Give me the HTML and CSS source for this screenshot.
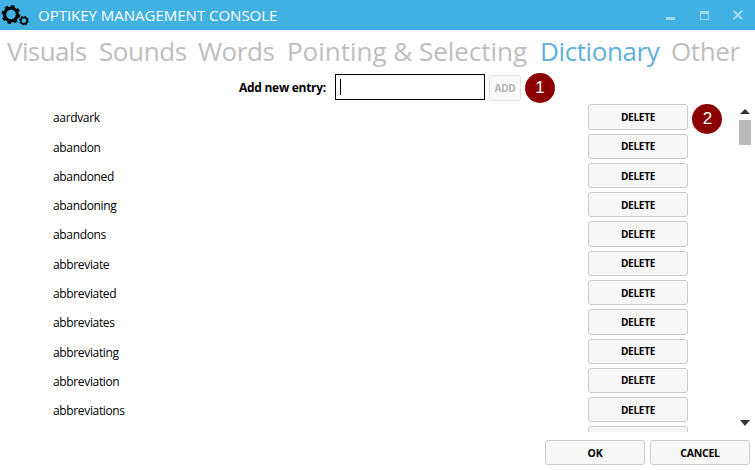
FILE: index.html
```html
<!DOCTYPE html>
<html lang="en">
<head>
<meta charset="utf-8">
<title>OptiKey Management Console</title>
<link rel="stylesheet" href="styles.css">
</head>
<body>
<header class="titlebar">
  <svg class="gears" width="30" height="30" viewBox="0 0 30 30" fill="none" stroke="#000">
    <circle cx="11" cy="14.5" r="6.4" stroke-width="3.2"/>
    <circle cx="11" cy="14.5" r="8.4" stroke-width="2" stroke-dasharray="3.3 3.3"/>
    <circle cx="23.9" cy="20.7" r="3.2" stroke-width="1.6"/>
    <circle cx="23.9" cy="20.7" r="4.2" stroke-width="1.2" stroke-dasharray="1.65 1.65"/>
  </svg>
  <h1 class="title">OPTIKEY MANAGEMENT CONSOLE</h1>
  <svg class="controls" width="89" height="30" viewBox="0 0 89 30" fill="#a0d8ef">
    <path d="M0 17h9v3H0z"/>
    <path fill-rule="evenodd" d="M34 11h9v9h-9zM35 14v5h7v-5z"/>
    <path d="M67.5 10.7l8.6 8.6M76.1 10.7l-8.6 8.6" stroke="#a0d8ef" stroke-width="2.1"/>
  </svg>
</header>
<nav class="tabs">
  <a class="tab visuals">Visuals</a>
  <a class="tab sounds">Sounds</a>
  <a class="tab words">Words</a>
  <a class="tab pointing">Pointing &amp; Selecting</a>
  <a class="tab dictionary active">Dictionary</a>
  <a class="tab other">Other</a>
</nav>
<section class="entry">
  <label class="label">Add new entry:</label>
  <div class="field"><span class="caret"></span></div>
  <button class="btn add" disabled>ADD</button>
  <span class="badge">1</span>
</section>
<main class="list">
  <div class="rows">
    <div class="row"><span class="word">aardvark</span><button class="btn">DELETE</button><span class="badge second">2</span></div>
    <div class="row"><span class="word">abandon</span><button class="btn">DELETE</button></div>
    <div class="row"><span class="word">abandoned</span><button class="btn">DELETE</button></div>
    <div class="row"><span class="word">abandoning</span><button class="btn">DELETE</button></div>
    <div class="row"><span class="word">abandons</span><button class="btn">DELETE</button></div>
    <div class="row"><span class="word">abbreviate</span><button class="btn">DELETE</button></div>
    <div class="row"><span class="word">abbreviated</span><button class="btn">DELETE</button></div>
    <div class="row"><span class="word">abbreviates</span><button class="btn">DELETE</button></div>
    <div class="row"><span class="word">abbreviating</span><button class="btn">DELETE</button></div>
    <div class="row"><span class="word">abbreviation</span><button class="btn">DELETE</button></div>
    <div class="row"><span class="word">abbreviations</span><button class="btn">DELETE</button></div>
    <div class="row"><span class="word"></span><button class="btn"></button></div>
  </div>
  <div class="scrollbar">
    <svg width="10" height="5" viewBox="0 0 10 5"><path d="M0 5L5 0l5 5z" fill="#333"/></svg>
    <div class="thumb"></div>
    <svg class="down" width="10" height="6" viewBox="0 0 10 6"><path d="M0 0h10L5 6z" fill="#333"/></svg>
  </div>
</main>
<footer class="footer">
  <button class="btn">OK</button>
  <button class="btn cancel">CANCEL</button>
</footer>
</body>
</html>
```
FILE: styles.css
```css
* { box-sizing: border-box; }
body {
  margin: 0;
  width: 755px;
  height: 470px;
  overflow: hidden;
  background: #fff;
  color: #000;
  font: 12px/16px "Open Sans", sans-serif;
}
.titlebar {
  display: flex;
  height: 30px;
  background: #41b1e1;
}
.gears { margin-left: -0.5px; }
.title {
  margin: 0 0 0 8.5px;
  font-size: 15px;
  font-weight: 400;
  line-height: 31px;
  letter-spacing: -0.01px;
  color: #fff;
  white-space: nowrap;
}
.controls { margin-left: auto; }
.tabs {
  display: flex;
  height: 43px;
  padding-left: 7px;
}
.tab {
  flex: none;
  font-size: 26px;
  line-height: 43px;
  letter-spacing: -0.4px;
  color: #bebebe;
  white-space: nowrap;
}
.visuals { width: 92px; letter-spacing: -0.6px; }
.sounds { width: 99px; }
.words { width: 89px; }
.pointing { width: 253px; letter-spacing: -0.02px; }
.dictionary { width: 131px; }
.active { color: #60b0dc; }
.entry {
  display: flex;
  align-items: center;
  height: 30px;
  padding-left: 239px;
}
.label {
  width: 96px;
  font-weight: 700;
  letter-spacing: -0.28px;
  white-space: nowrap;
}
.field {
  width: 150px;
  height: 26px;
  margin-bottom: 2px;
  padding: 4px;
  border: 1px solid #000;
}
.caret {
  display: block;
  width: 1px;
  height: 16px;
  background: #000;
}
.btn {
  flex: none;
  width: 100px;
  height: 25.3px;
  padding: 0;
  border: 1px solid #ccc;
  border-radius: 3px;
  background: #f7f7f7;
  color: #000;
  font: 700 10px/16px "Open Sans", sans-serif;
  letter-spacing: -0.25px;
}
.add {
  width: 32px;
  margin-left: 4px;
  border-color: #e2e2e2;
  background: #fafafa;
  color: #b2b2b2;
}
.badge {
  flex: none;
  width: 30px;
  height: 30px;
  margin-left: 4px;
  border-radius: 50%;
  background: #8b0000;
  color: #fff;
  font: 17px/30px "Liberation Sans", sans-serif;
  text-align: center;
}
.second { margin-left: 4.4px; }
.list {
  display: flex;
  height: 329px;
  overflow: hidden;
}
.rows {
  width: 739px;
  padding: 1.4px 0 0 53px;
}
.row {
  display: flex;
  align-items: flex-start;
  height: 29.27px;
}
.word {
  width: 535px;
  line-height: 28px;
  letter-spacing: -0.35px;
}
.scrollbar {
  display: flex;
  flex-direction: column;
  align-items: center;
  width: 12px;
  padding: 6px 0;
}
.thumb {
  width: 12px;
  height: 25px;
  margin-top: 6px;
  background: #b9b9b9;
}
.down { margin-top: auto; }
.footer {
  display: flex;
  gap: 5px;
  padding: 8px 0 0 545px;
}
.footer .btn { font-size: 10.5px; }
```
